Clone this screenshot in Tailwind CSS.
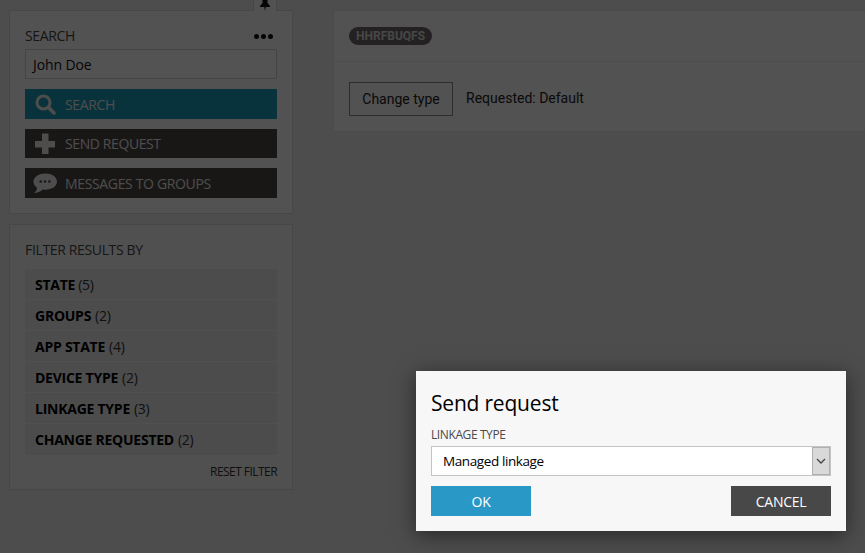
<!DOCTYPE html>
<html lang="en">
<head>
  <meta charset="UTF-8">
  <title>Send request</title>
  <script src="https://cdn.jsdelivr.net/npm/@tailwindcss/browser@4"></script>
</head>
<body class="relative w-[865px] h-[553px] overflow-hidden bg-[#e9e8e8] font-['Open_Sans',sans-serif] text-[14px] text-black">

  <div class="flex items-start gap-[40px] pl-[9px] pt-[10px]">
    <!-- Left column -->
    <aside class="flex w-[284px] shrink-0 flex-col gap-[10px]">
      <section class="relative h-[204px] border border-[#d8d8d8] bg-[#f8f7f8] px-[15px] pt-[15px]">
        <div class="absolute -top-[11px] right-[15px] flex h-[11px] w-[24px] justify-center overflow-hidden border-x border-[#d8d8d8] bg-[#f8f7f8]">
          <svg class="-mt-[3px]" width="10" height="14" viewBox="0 0 10 14"><path fill="#111" d="M2.500 0h5v6l2.500 3v1H5.700L5 14l-.7-4H0V9l2.500-3z"/></svg>
        </div>
        <div class="flex h-[20px] items-center justify-between">
          <span class="-mt-[2px] text-[14px] tracking-[-0.35px] text-[#444]">SEARCH</span>
          <span class="mr-[4px] flex gap-[2px]">
            <i class="size-[5px] rounded-full bg-[#111]"></i><i class="size-[5px] rounded-full bg-[#111]"></i><i class="size-[5px] rounded-full bg-[#111]"></i>
          </span>
        </div>
        <div class="mt-[3px] flex h-[30px] w-[252px] items-center border border-[#d0d0d0] bg-[#fafafa] pl-[7px] text-[14px] tracking-[-0.1px] text-[#111]">John Doe</div>
        <div class="mt-[10px] flex h-[30px] w-[252px] items-center bg-[#1a9ab5] pl-[8px] text-[14px] tracking-[-0.35px] text-[#e8e8e8]">
          <svg class="mr-[8px] w-[24px]" width="24" height="24" viewBox="0 0 24 24"><circle cx="10.5" cy="10.5" r="6.5" fill="none" stroke="#e8e8e8" stroke-width="3"/><path d="M15.5 15.5l5.5 5.5" stroke="#e8e8e8" stroke-width="3.6" stroke-linecap="round"/></svg>
          SEARCH
        </div>
        <div class="mt-[10px] flex h-[29px] w-[252px] items-center bg-[#4d4545] pl-[8px] text-[14px] tracking-[-0.4px] text-[#e8e8e8]">
          <svg class="mr-[8px] w-[24px]" width="24" height="24" viewBox="0 0 24 24"><path fill="#e8e8e8" d="M9 1.500h6.500V9H22v6.500h-6.500V22H9v-6.500H2V9h7z"/></svg>
          SEND REQUEST
        </div>
        <div class="mt-[10px] flex h-[30px] w-[252px] items-center bg-[#4d4545] pl-[8px] text-[14px] tracking-[-0.35px] text-[#e8e8e8]">
          <svg class="mr-[8px] w-[24px]" width="25" height="22" viewBox="0 0 25 22"><path fill="#e8e8e8" d="M13 1c6.500 0 12 3.500 12 8.500S19.500 18 13 18c-1 0-2 0-3-.2C8 20 4.500 21.500 1 21.500c2-1.500 3-3.300 3.200-5.500C2 14.500.500 12.200.500 9.500.500 4.500 6.500 1 13 1z"/><g fill="#4d4545"><circle cx="8" cy="9.500" r="1.300"/><circle cx="12.500" cy="9.500" r="1.300"/><circle cx="17" cy="9.500" r="1.300"/></g></svg>
          MESSAGES TO GROUPS
        </div>
      </section>

      <section class="flex h-[266px] flex-col border border-[#d8d8d8] bg-[#f4f3f4] px-[15px] pt-[15px]">
        <div class="flex h-[20px] items-center pb-[2px] text-[14px] tracking-[-0.35px] text-[#444]">FILTER RESULTS BY</div>
        <ul class="mt-[9px] w-[252px] divide-y divide-[#f4f3f4] bg-[#e6e5e5] text-[14px] tracking-[-0.25px]">
          <li class="flex h-[31px] items-center pl-[10px]"><b class="mr-[3px] font-bold">STATE</b><span class="text-[#333]">(5)</span></li>
          <li class="flex h-[31px] items-center pl-[10px]"><b class="mr-[4px] font-bold">GROUPS</b><span class="text-[#333]">(2)</span></li>
          <li class="flex h-[31px] items-center pl-[10px]"><b class="mr-[4px] font-bold">APP STATE</b><span class="text-[#333]">(4)</span></li>
          <li class="flex h-[31px] items-center pl-[10px]"><b class="mr-[4px] font-bold">DEVICE TYPE</b><span class="text-[#333]">(2)</span></li>
          <li class="flex h-[31px] items-center pl-[10px]"><b class="mr-[4px] font-bold">LINKAGE TYPE</b><span class="text-[#333]">(3)</span></li>
          <li class="flex h-[31px] items-center pl-[10px]"><b class="mr-[4px] font-bold">CHANGE REQUESTED</b><span class="text-[#333]">(2)</span></li>
        </ul>
        <div class="mt-[8px] w-[252px] text-right text-[12px] tracking-[-0.55px] text-[#333]">RESET FILTER</div>
      </section>
    </aside>

    <!-- Main panel -->
    <main class="h-[122px] flex-1 border-y border-l border-[#e4e4e4] bg-[#f8f7f8] font-['Roboto',sans-serif]">
      <div class="flex h-[51px] items-center border-b border-[#e6e6e6] pl-[15px]">
        <span class="rounded-full bg-[#6b6565] px-[7px] py-[2px] text-[12px] leading-[14px] font-bold text-[#d8d8d8]">HHRFBUQFS</span>
      </div>
      <div class="flex items-center pl-[15px] pt-[20px]">
        <div class="flex h-[34px] w-[104px] items-center justify-center border border-[#8a8a8a] bg-[#f8f7f8] text-[14px] text-[#222]">Change type</div>
        <span class="ml-[13px] -mt-[1px] text-[14px] text-[#222]">Requested: Default</span>
      </div>
    </main>
  </div>

  <!-- Modal overlay -->
  <div class="absolute inset-0 bg-black/[0.67]"></div>
  <div class="absolute left-[416px] top-[371px] h-[160px] w-[430px] bg-[#f7f7f7] px-[15px] pt-[17px] shadow-[0_4px_20px_rgba(0,0,0,0.5)]">
    <h2 class="text-[21px] leading-[30px] tracking-[-0.2px] text-black">Send request</h2>
    <div class="mt-[9px] text-[12px] leading-[16px] tracking-[-0.4px] text-[#4a4a4a]">LINKAGE TYPE</div>
    <div class="mt-[3px] flex h-[30px] w-[400px] items-center justify-between border border-[#c4c4c4] bg-white pl-[11px] text-[13.5px] tracking-[-0.4px] text-black">
      <span class="pt-[1px]">Managed linkage</span>
      <span class="flex h-full w-[18px] items-center justify-center border border-[#b0b0b0] bg-[#d9d9d9]">
        <svg width="10" height="6" viewBox="0 0 10 6"><path d="M1 1l4 4 4-4" fill="none" stroke="#444" stroke-width="1.300"/></svg>
      </span>
    </div>
    <div class="mt-[10px] flex w-[400px] justify-between text-[14px] tracking-[-0.3px] text-white">
      <div class="flex h-[30px] w-[100px] items-center justify-center bg-[#2a98c6]">OK</div>
      <div class="flex h-[30px] w-[100px] items-center justify-center bg-[#484848]">CANCEL</div>
    </div>
  </div>

</body>
</html>
